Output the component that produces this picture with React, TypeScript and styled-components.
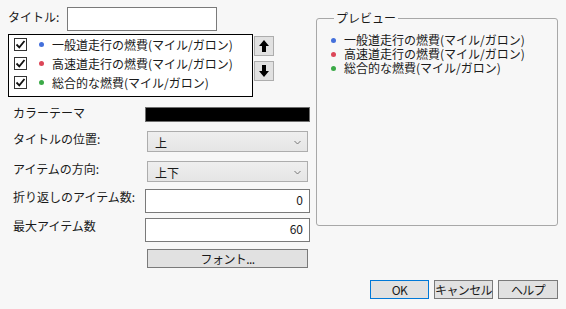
import styled, { createGlobalStyle } from "styled-components";

const GlobalStyle = createGlobalStyle`
  html, body { margin: 0; padding: 0; background: #f7f7f7; }
  body {
    font-family: "Noto Sans CJK JP", "Noto Sans", sans-serif;
    font-size: 12px;
    color: #1a1a1a;
  }
`;

const Window = styled.div`
  width: 566px;
  height: 309px;
  box-sizing: border-box;
  padding: 7px 8px 10px 8px;
  display: flex;
  flex-direction: column;
`;

const Main = styled.div`
  display: flex;
  align-items: flex-start;
`;

const LeftCol = styled.div`
  width: 302px;
  display: flex;
  flex-direction: column;
`;

const TitleRow = styled.div`
  display: flex;
  align-items: center;
  height: 24px;
`;

const TitleLabel = styled.span`
  width: 59px;
  line-height: 16px;
  margin-top: -4px;
`;

const TextBox = styled.div<{ $w: number; $align?: string }>`
  width: ${(p) => p.$w}px;
  height: 24px;
  box-sizing: border-box;
  background: #fff;
  border: 1px solid #7a7a7a;
  text-align: ${(p) => p.$align || "left"};
  padding: 2px 6px;
  line-height: 16px;
`;

const ListRow = styled.div`
  display: flex;
  margin-top: 3px;
`;

const ListBox = styled.div`
  width: 245px;
  height: 63px;
  box-sizing: border-box;
  border: 1px solid #000;
  background: #fff;
  padding-left: 5px;
`;

const ListItem = styled.div`
  height: 19px;
  display: flex;
  align-items: center;
`;

const Check = styled.span`
  width: 13px;
  height: 13px;
  box-sizing: border-box;
  border: 1px solid #333;
  background: #fff;
  display: inline-flex;
  align-items: center;
  justify-content: center;
  margin-right: 12px;
`;

const Dot = styled.span<{ $c: string }>`
  width: 5px;
  height: 5px;
  border-radius: 50%;
  background: ${(p) => p.$c};
  margin-right: 8px;
  flex: none;
`;

const ArrowCol = styled.div`
  display: flex;
  flex-direction: column;
  gap: 5px;
  margin-left: 1px;
  margin-top: 2px;
`;

const ArrowBtn = styled.div`
  width: 20px;
  height: 20px;
  box-sizing: border-box;
  background: #e1e1e1;
  border: 1px solid #adadad;
  display: flex;
  align-items: center;
  justify-content: center;
`;

const Form = styled.div`
  margin-top: 10px;
  display: flex;
  flex-direction: column;
`;

const FormRow = styled.div<{ $top: number }>`
  display: flex;
  align-items: flex-start;
  margin-top: ${(p) => p.$top}px;
`;

const Label = styled.span<{ $shift?: number }>`
  width: 137px;
  padding-left: 5px;
  box-sizing: border-box;
  line-height: 16px;
  margin-top: ${(p) => p.$shift || 0}px;
  white-space: nowrap;
`;

const ColorBar = styled.div`
  width: 165px;
  height: 15px;
  box-sizing: border-box;
  background: #000;
  border: 1px solid #6f6f6f;
`;

const Select = styled.div`
  width: 161px;
  height: 21px;
  margin-left: 2px;
  box-sizing: border-box;
  background: linear-gradient(#efefef, #e5e5e5);
  border: 1px solid #adadad;
  display: flex;
  align-items: center;
  justify-content: space-between;
  padding: 1px 6px 0 7px;
`;

const Button = styled.div<{ $w: number; $focus?: boolean }>`
  width: ${(p) => p.$w}px;
  height: 19px;
  box-sizing: border-box;
  background: #e1e1e1;
  border: 1px solid ${(p) => (p.$focus ? "#0078d7" : "#7a7a7a")};
  display: flex;
  align-items: center;
  justify-content: center;
  line-height: 16px;
  white-space: nowrap;
  letter-spacing: -0.6px;
`;

const FontButton = styled(Button)`
  margin-left: 2px;
`;

const Group = styled.fieldset`
  margin: 4px 0 0 6px;
  width: 242px;
  height: 215px;
  box-sizing: border-box;
  border: 1px solid #a8a8a8;
  border-radius: 3px;
  padding: 8px 0 0 14px;
  min-width: 0;
`;

const Legend = styled.legend`
  padding: 0 2px;
  margin-left: 3px;
  line-height: 14px;
`;

const PreviewItem = styled.div`
  height: 14px;
  line-height: 14px;
  display: flex;
  align-items: center;
`;

const Footer = styled.div`
  margin-top: auto;
  display: flex;
  justify-content: flex-end;
  gap: 5px;
`;

const items = [
  { c: "#4470db", t: "一般道走行の燃費(マイル/ガロン)" },
  { c: "#dc4658", t: "高速道走行の燃費(マイル/ガロン)" },
  { c: "#3caa48", t: "総合的な燃費(マイル/ガロン)" },
];

const CheckMark = () => (
  <svg width="11" height="11" viewBox="0 0 11 11">
    <path d="M1.5 5.5 L4.3 8.3 L9.5 2" fill="none" stroke="#111" strokeWidth="1.8" />
  </svg>
);

const Arrow = ({ up }: { up?: boolean }) => (
  <svg width="10" height="12" viewBox="0 0 10 12">
    <path
      d={up ? "M5 0 L10 6 L7 6 L7 12 L3 12 L3 6 L0 6 Z" : "M5 12 L10 6 L7 6 L7 0 L3 0 L3 6 L0 6 Z"}
      fill="#000"
    />
  </svg>
);

const Chevron = () => (
  <svg width="7" height="5" viewBox="0 0 7 5">
    <path d="M0.5 1 L3.5 4 L6.5 1" fill="none" stroke="#777" strokeWidth="1" />
  </svg>
);

export default function App() {
  return (
    <Window>
      <GlobalStyle />
      <Main>
        <LeftCol>
          <TitleRow>
            <TitleLabel>タイトル:</TitleLabel>
            <TextBox $w={150} />
          </TitleRow>
          <ListRow>
            <ListBox>
              {items.map((it) => (
                <ListItem key={it.t}>
                  <Check>
                    <CheckMark />
                  </Check>
                  <Dot $c={it.c} />
                  {it.t}
                </ListItem>
              ))}
            </ListBox>
            <ArrowCol>
              <ArrowBtn>
                <Arrow up />
              </ArrowBtn>
              <ArrowBtn>
                <Arrow />
              </ArrowBtn>
            </ArrowCol>
          </ListRow>
          <Form>
            <FormRow $top={0}>
              <Label $shift={-2}>カラーテーマ</Label>
              <ColorBar />
            </FormRow>
            <FormRow $top={9}>
              <Label>タイトルの位置:</Label>
              <Select>
                <span>上</span>
                <Chevron />
              </Select>
            </FormRow>
            <FormRow $top={9}>
              <Label>アイテムの方向:</Label>
              <Select>
                <span>上下</span>
                <Chevron />
              </Select>
            </FormRow>
            <FormRow $top={7}>
              <Label>折り返しのアイテム数:</Label>
              <TextBox $w={165} $align="right">0</TextBox>
            </FormRow>
            <FormRow $top={5}>
              <Label>最大アイテム数</Label>
              <TextBox $w={165} $align="right">60</TextBox>
            </FormRow>
            <FormRow $top={7}>
              <Label />
              <FontButton $w={161}>フォント...</FontButton>
            </FormRow>
          </Form>
        </LeftCol>
        <Group>
          <Legend>プレビュー</Legend>
          {items.map((it) => (
            <PreviewItem key={it.t}>
              <Dot $c={it.c} />
              {it.t}
            </PreviewItem>
          ))}
        </Group>
      </Main>
      <Footer>
        <Button $w={59} $focus>OK</Button>
        <Button $w={59}>キャンセル</Button>
        <Button $w={60}>ヘルプ</Button>
      </Footer>
    </Window>
  );
}
